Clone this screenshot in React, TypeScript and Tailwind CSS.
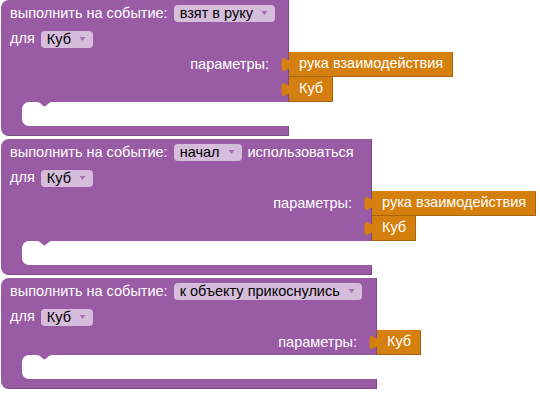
import type { ReactNode } from 'react'

const font = { fontFamily: '"Liberation Sans", Arial, sans-serif' }

function Dropdown({ label }: { label: string }) {
  return (
    <span className="flex h-[17px] items-center gap-[8px] rounded-[4px] bg-[#d6bddb] pl-[6px] pr-[7px] text-[14.5px] leading-none text-black">
      {label}
      <svg width="7" height="5" viewBox="0 0 7 5">
        <path d="M0.5,0 L6.5,0 L3.5,4 Z" fill="#a66fb0" />
      </svg>
    </span>
  )
}

function ValueBlock({ label }: { label: string }) {
  return (
    <div className="relative flex h-[25px] items-center border-r border-b border-[#a9650b] bg-[#d5800e] pl-[10px] pr-[9px] text-[14.5px] text-white">
      <svg
        className="absolute -left-[8px] top-0"
        width="8"
        height="25"
        viewBox="0 0 8 25"
      >
        <path d="M8.5,5 c0,10 -8,-8 -8,7.5 s8,-2.5 8,7.5 Z" fill="#d5800e" />
      </svg>
      {label}
    </div>
  )
}

function EventBlock({
  width,
  event,
  params,
}: {
  width: number
  event: ReactNode
  params: string[]
}) {
  return (
    <div className="ml-[1px] flex flex-col items-start text-white">
      <div
        className="flex flex-col rounded-tl-[8px] border-r border-[#7b4985] bg-[#9a5ba5] pl-[9px]"
        style={{ width }}
      >
        <div className="flex h-[26px] items-center gap-[6px] pt-[1px] text-[14.5px]">
          <span>выполнить на событие:</span>
          {event}
        </div>
        <div className="flex h-[26px] items-center gap-[6px] text-[14.5px]">
          <span>для</span>
          <Dropdown label="Куб" />
        </div>
      </div>
      <div className="flex">
        <div
          className="flex justify-end border-r border-[#7b4985] bg-[#9a5ba5] pr-[19px]"
          style={{ width }}
        >
          <span className="flex h-[25px] items-center text-[14.5px]">
            параметры:
          </span>
        </div>
        <div className="flex flex-col">
          {params.map((p) => (
            <div key={p} className="flex">
              <ValueBlock label={p} />
            </div>
          ))}
        </div>
      </div>
      <div className="flex h-[24px] bg-[#9a5ba5]" style={{ width }}>
        <div className="relative ml-[21px] flex-1 rounded-l-[7px] bg-white">
          <svg
            className="absolute left-[15px] top-0"
            width="15"
            height="5"
            viewBox="0 0 15 5"
          >
            <path
              d="M0,0 c2,0 3,1 4,2 l2.5,2 c0.6,0.5 1.4,0.5 2,0 l2.5,-2 c1,-1 2,-2 4,-2 Z"
              fill="#9a5ba5"
            />
          </svg>
        </div>
      </div>
      <div
        className="h-[10px] rounded-bl-[8px] border-r border-b border-[#7b4985] bg-[#9a5ba5]"
        style={{ width }}
      />
    </div>
  )
}

export default function App() {
  return (
    <div className="flex h-[393px] w-[540px] flex-col gap-[3px] overflow-hidden bg-white" style={font}>
      <EventBlock
        width={288}
        event={<Dropdown label="взят в руку" />}
        params={['рука взаимодействия', 'Куб']}
      />
      <EventBlock
        width={371}
        event={
          <>
            <Dropdown label="начал" />
            <span>использоваться</span>
          </>
        }
        params={['рука взаимодействия', 'Куб']}
      />
      <EventBlock
        width={376}
        event={<Dropdown label="к объекту прикоснулись" />}
        params={['Куб']}
      />
    </div>
  )
}
